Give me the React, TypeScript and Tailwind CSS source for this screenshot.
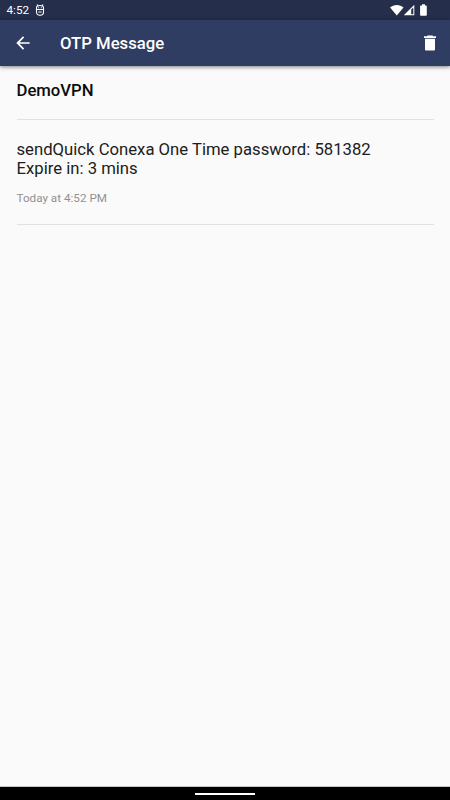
import type { ReactNode } from 'react';
import { MdArrowBack } from 'react-icons/md';

function StatusBar() {
  return (
    <div className="flex h-5 items-center justify-between bg-[#252e4b] pl-[6.5px] pr-[22px] text-white">
      <div className="flex items-center gap-[6px]">
        <span className="text-[11.7px] leading-5">4:52</span>
        {/* Debug head */}
        <svg width="10" height="12" viewBox="0 0 10 12" fill="none" stroke="currentColor" strokeWidth="1.1">
          <path d="M1.5 5.5h7V8a3.2 3.2 0 0 1-3.2 3.2h-.6A3.2 3.2 0 0 1 1.5 8z" />
          <path d="M1.5 5.5V3.8C1.5 2.3 3 1.500 5 1.500s3.500.8 3.500 2.300v1.700M2 .5l.8 1.300M8 .5l-.8 1.300" />
          <path d="M3.200 3.700h1M5.800 3.700h1M3.300 8h3.400" />
        </svg>
      </div>
      <div className="flex items-center">
        <svg width="14" height="12" viewBox="0 0 14 12" fill="currentColor">
          <path d="M.1 3.5C1.9 1.9 4.2 1 6.8 1s4.9.9 6.7 2.5L6.8 11.5z" />
        </svg>
        <svg width="11" height="12" viewBox="0 0 11 12" fill="currentColor">
          <path fillRule="evenodd" d="M10.3.8v10.500H-.2zM9.300 3.500v6.800H7.200V5.600z" />
        </svg>
        <svg className="ml-[4px]" width="9" height="12" viewBox="0 0 9 12" fill="currentColor">
          <path d="M3 .3h3v1.200h1c.5 0 .8.3.8.8v8.700c0 .5-.3.8-.8.8H1.900c-.5 0-.8-.3-.8-.8V2.300c0-.5.3-.8.8-.8H3z" />
        </svg>
      </div>
    </div>
  );
}

function AppBar() {
  return (
    <header className="relative flex h-[46px] items-center bg-[#303d63] pl-[13px] pr-[10px] text-white shadow-[0_1px_4px_rgba(0,0,0,0.5)]">
      <button type="button" aria-label="Back">
        <MdArrowBack size={20} />
      </button>
      <h1 className="ml-[27px] flex-1 pt-[2px] text-[16.7px] font-medium leading-6">OTP Message</h1>
      <button type="button" aria-label="Delete">
        <svg width="20" height="20" viewBox="0 0 20 20" fill="currentColor">
          <path d="M7.5 2.500h5l.7.800H16V5H4V3.300h2.800zM5 5.800h10v10.400c0 .7-.5 1.300-1.200 1.300H6.200c-.7 0-1.200-.6-1.200-1.300z" />
        </svg>
      </button>
    </header>
  );
}

function Section({ children }: { children: ReactNode }) {
  return <section className="border-b border-[#e1e1e1]">{children}</section>;
}

export default function App() {
  return (
    <div className="flex h-screen flex-col bg-[#fafafa] font-['Roboto',sans-serif]">
      <StatusBar />
      <AppBar />

      <main className="flex-1 px-[16.5px]">
        <Section>
          <h2 className="pb-[18px] pt-[15px] text-[16.7px] font-medium leading-5 text-[#0c0c0c]">DemoVPN</h2>
        </Section>
        <Section>
          <p className="pt-[20px] text-[16.7px] leading-[19px] text-[#202020]">
            sendQuick Conexa One Time password: 581382
            <br />
            Expire in: 3 mins
          </p>
          <p className="pb-[18px] pt-[13px] text-[11.7px] leading-[15px] text-[#919191]">Today at 4:52 PM</p>
        </Section>
      </main>

      {/* System navigation */}
      <div className="flex h-[14px] items-center justify-center border-t border-[#c8c8c8] bg-black pt-px">
        <div className="h-[2px] w-[60px] bg-white" />
      </div>
    </div>
  );
}
